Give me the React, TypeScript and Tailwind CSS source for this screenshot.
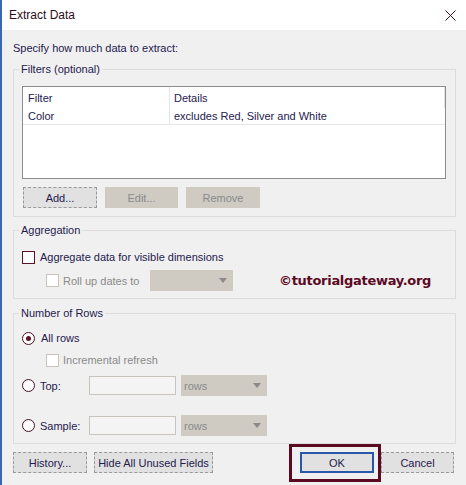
import React from "react";

const txt = "text-[#24204e]";

function Btn({ children, w, disabled }: { children: React.ReactNode; w: string; disabled?: boolean }) {
  return (
    <div
      className={`${w} shrink-0 whitespace-nowrap h-[21px] flex items-center justify-center border border-dashed ${
        disabled ? "bg-[#cfcbc3] border-[#cfcbc3] text-[#8a8a8a]" : "bg-[#e1e1e1] border-[#9a9a9a] text-[#24204e]"
      }`}
    >
      {children}
    </div>
  );
}

function Check({ disabled }: { disabled?: boolean }) {
  return (
    <div
      className={`w-[13px] h-[13px] shrink-0 border bg-white ${disabled ? "border-[#c8c4bc]" : "border-[#5a1428]"}`}
    />
  );
}

function Radio({ checked }: { checked?: boolean }) {
  return (
    <div className="w-[13px] h-[13px] shrink-0 rounded-full border border-[#4a1020] bg-white flex items-center justify-center">
      {checked && <div className="w-[5px] h-[5px] rounded-full bg-[#5a1428]" />}
    </div>
  );
}

function Combo({ w, label }: { w: string; label?: string }) {
  return (
    <div className={`${w} shrink-0 h-[21px] bg-[#cfcbc3] flex items-center pl-[3px] pr-[6px] text-[#8a8a8a]`}>
      <span className="flex-1">{label}</span>
      <svg width="8" height="5" viewBox="0 0 8 5">
        <path d="M0 0 L8 0 L4 5 Z" fill="#8a8a8a" />
      </svg>
    </div>
  );
}

function Group({ title, children, className }: { title: string; children: React.ReactNode; className?: string }) {
  return (
    <div className={`relative shrink-0 border border-[#dcdcdc] ${className ?? ""}`}>
      <span className={`absolute left-[5px] top-[-9px] px-[2px] bg-[#f0f0f0] leading-[16px] whitespace-nowrap ${txt}`}>
        {title}
      </span>
      {children}
    </div>
  );
}

export default function App() {
  return (
    <div
      className="w-[466px] h-[485px] bg-[#f0f0f0] border-l-2 border-[#3a67b4] flex flex-col text-[11px] leading-[16px] overflow-hidden whitespace-nowrap"
      style={{ fontFamily: '"Liberation Sans", Arial, sans-serif' }}
    >
      {/* Title bar */}
      <div className="h-[30px] bg-white flex items-center pl-[7px] pr-[8px] shrink-0">
        <span className="text-[#2a0d18] text-[12px]">Extract Data</span>
        <svg className="ml-auto mr-[2px]" width="11" height="11" viewBox="0 0 11 11">
          <path d="M0.5 0.5 L10.5 10.5 M10.5 0.5 L0.5 10.5" stroke="#3a1020" strokeWidth="1" />
        </svg>
      </div>

      <div className="pl-[11px] pr-[8px] flex flex-col">
        <div className={`mt-[10px] h-[16px] ${txt}`}>Specify how much data to extract:</div>

        {/* Filters */}
        <Group title="Filters (optional)" className="mt-[13px] w-[443px] h-[148px] pt-[16px] pl-[8px]">
          <div className="w-[424px] h-[93px] bg-white border border-[#8c8c8c] flex flex-col">
            <div className={`flex h-[21px] items-center ${txt}`}>
              <div className="w-[147px] pl-[5px] h-full flex items-center border-r border-[#e5e5e5]">Filter</div>
              <div className="flex-1 pl-[4px] h-full flex items-center border-r border-[#e5e5e5]">Details</div>
            </div>
            <div className={`flex h-[17px] items-center border-b border-[#e5e5e5] ${txt}`}>
              <div className="w-[147px] pl-[5px] h-full flex items-center border-r border-[#e5e5e5]">Color</div>
              <div className="flex-1 pl-[4px]">excludes Red, Silver and White</div>
            </div>
          </div>
          <div className="flex gap-[8px] mt-[8px] ml-[1px]">
            <Btn w="w-[74px]">Add...</Btn>
            <Btn w="w-[73px]" disabled>Edit...</Btn>
            <Btn w="w-[74px]" disabled>Remove</Btn>
          </div>
        </Group>

        {/* Aggregation */}
        <Group title="Aggregation" className="mt-[13px] w-[443px] h-[69px] pt-[18px] pl-[8px]">
          <div className={`flex items-center h-[16px] gap-[5px] ${txt}`}>
            <Check />
            <span>Aggregate data for visible dimensions</span>
          </div>
          <div className="flex items-center h-[21px] mt-[5px] pl-[24px]">
            <Check disabled />
            <span className="ml-[4px] w-[87px] shrink-0 text-[#8a8a8a]">Roll up dates to</span>
            <Combo w="w-[83px]" />
            <span
              className="ml-[46px] text-[#5c0a24] font-bold text-[13px] tracking-[-0.3px]"
              style={{ fontFamily: '"DejaVu Sans", Verdana, sans-serif' }}
            >
              ©tutorialgateway.org
            </span>
          </div>
        </Group>

        {/* Number of Rows */}
        <Group title="Number of Rows" className="mt-[14px] w-[443px] h-[131px] pt-[16px] pl-[8px]">
          <div className={`flex items-center h-[16px] gap-[6px] ${txt}`}>
            <Radio checked />
            <span>All rows</span>
          </div>
          <div className="flex items-center h-[16px] mt-[6px] pl-[24px] gap-[4px]">
            <Check disabled />
            <span className="text-[#8a8a8a]">Incremental refresh</span>
          </div>
          <div className={`flex items-center h-[21px] mt-[7px] ${txt}`}>
            <Radio />
            <span className="ml-[5px] w-[49px] shrink-0">Top:</span>
            <div className="w-[87px] shrink-0 h-[19px] border border-[#c8c4bc] bg-[#f4f4f4]" />
            <div className="ml-[5px]">
              <Combo w="w-[86px]" label="rows" />
            </div>
          </div>
          <div className={`flex items-center h-[21px] mt-[19px] ${txt}`}>
            <Radio />
            <span className="ml-[5px] w-[49px] shrink-0">Sample:</span>
            <div className="w-[87px] shrink-0 h-[19px] border border-[#c8c4bc] bg-[#f4f4f4]" />
            <div className="ml-[5px]">
              <Combo w="w-[86px]" label="rows" />
            </div>
          </div>
        </Group>

        {/* Bottom buttons */}
        <div className="flex mt-[8px] items-center">
          <Btn w="w-[74px]">History...</Btn>
          <div className="ml-[7px]">
            <Btn w="w-[119px]">Hide All Unused Fields</Btn>
          </div>
          <div className="relative ml-[87px] shrink-0">
            <div className="w-[74px] h-[21px] bg-[#e1e1e1] border-2 border-[#2a58a8] flex items-center justify-center text-[#24204e]">
              OK
            </div>
            <div className="absolute left-[-11px] top-[-8px] w-[92px] h-[38px] border-[3px] border-[#5c0a22]" />
          </div>
          <div className="ml-[7px]">
            <Btn w="w-[73px]">Cancel</Btn>
          </div>
        </div>
      </div>
    </div>
  );
}
